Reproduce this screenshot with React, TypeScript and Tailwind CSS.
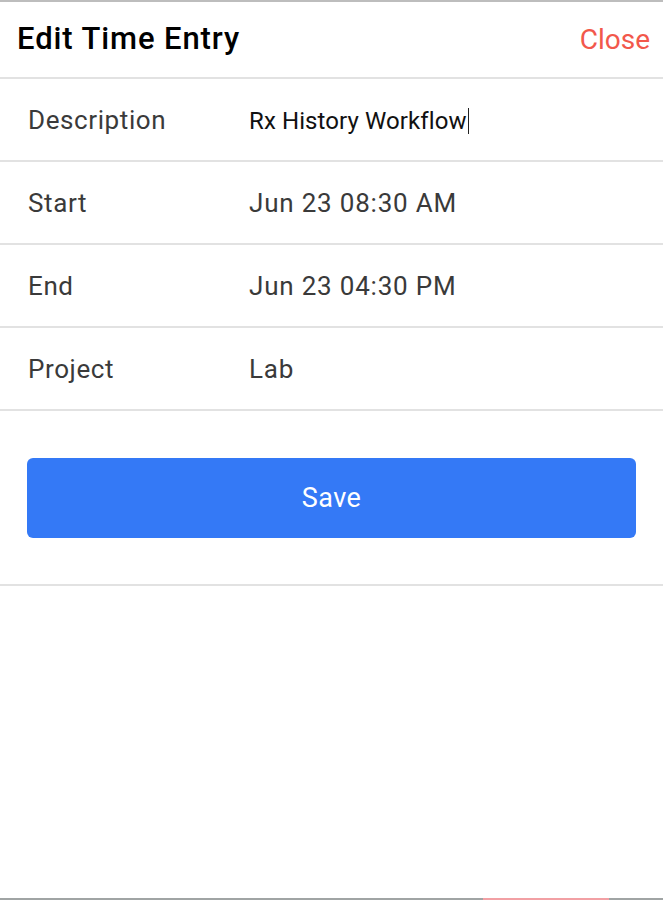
import React from "react";

const rows = [
  { label: "Start", value: "Jun 23 08:30 AM" },
  { label: "End", value: "Jun 23 04:30 PM" },
  { label: "Project", value: "Lab" },
];

export default function App() {
  return (
    <div
      className="flex h-[900px] w-full flex-col bg-white"
      style={{ fontFamily: "Roboto, 'Noto Sans', sans-serif" }}
    >
      <div className="h-[2px] w-full bg-[#bdbdbd]" />
      <div className="flex h-[77px] items-center justify-between border-b-2 border-[#e2e2e2] pl-[17px] pr-[13px]">
        <span className="text-[31px] font-medium tracking-[0.9px] text-black">Edit Time Entry</span>
        <span className="text-[28px] text-[#f2584b]">Close</span>
      </div>
      <div className="flex h-[83px] items-center border-b-2 border-[#e2e2e2] pt-[2px]">
        <span className="w-[249px] pl-[28px] text-[26px] tracking-[0.6px] text-[#3a3a3a]">Description</span>
        <span className="flex items-center text-[24px] tracking-[0.1px] text-[#111]">
          Rx History Workflow
          <span className="ml-[1px] inline-block h-[26px] w-[1.5px] bg-[#222]" />
        </span>
      </div>
      {rows.map((r) => (
        <div key={r.label} className="flex h-[83px] items-center border-b-2 border-[#e2e2e2] pt-[2px]">
          <span className="w-[249px] pl-[28px] text-[26px] tracking-[0.6px] text-[#3a3a3a]">{r.label}</span>
          <span className="text-[26px] tracking-[0.8px] text-[#3a3a3a]">{r.value}</span>
        </div>
      ))}
      <div className="border-b-2 border-[#e2e2e2] px-[27px] pb-[46px] pt-[47px]">
        <button className="flex h-[80px] w-full items-center justify-center rounded-[6px] bg-[#3479f6] text-[27px] tracking-[0.4px] text-white">
          Save
        </button>
      </div>
      <div className="flex-1" />
      <div className="flex h-[2px] w-full">
        <div className="w-[483px] bg-[#a0a4a4]" />
        <div className="w-[126px] bg-[#f2a0a4]" />
        <div className="flex-1 bg-[#a0a4a4]" />
      </div>
    </div>
  );
}
